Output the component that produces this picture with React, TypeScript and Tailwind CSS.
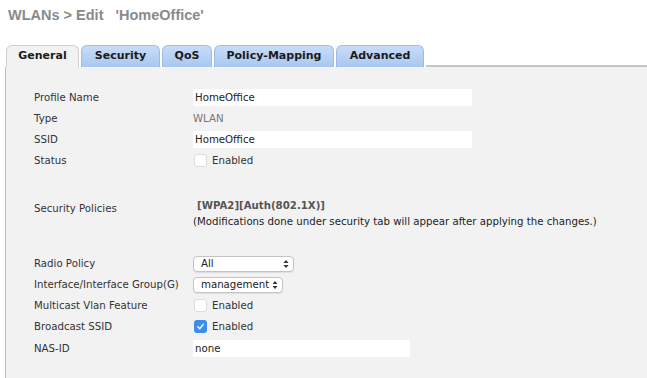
import type { ReactNode } from "react";

const tabs = ["General", "Security", "QoS", "Policy-Mapping", "Advanced"];
const tabWidths = ["w-[73px]", "w-[79px]", "w-[50px]", "w-[120px]", "w-[88px]"];

const Row = ({ label, children, h = "h-[21px]" }: { label: string; children?: ReactNode; h?: string }) => (
	<div className={`flex items-center ${h}`}>
		<div className="w-[159px] shrink-0 text-[#333]">{label}</div>
		<div className="flex items-center">{children}</div>
	</div>
);

const TextBox = ({ value, w }: { value: string; w: string }) => (
	<div className={`${w} h-[17px] bg-white flex items-center pl-[2px] text-[#222]`}>{value}</div>
);

const Check = ({ checked }: { checked?: boolean }) => (
	<div className="flex items-center">
		<div
			className={`w-[13px] h-[13px] rounded-[3px] ml-[1px] mr-[3px] flex items-center justify-center ${
				checked ? "bg-[#3b8ef0]" : "bg-white border border-[#dcdcdc]"
			}`}
		>
			{checked && (
				<svg width="9" height="9" viewBox="0 0 10 10">
					<path d="M2 5.2 L4.2 7.4 L8 2.6" stroke="white" strokeWidth="1.6" fill="none" strokeLinecap="round" />
				</svg>
			)}
		</div>
		<span className="ml-[2px] text-[#333]">Enabled</span>
	</div>
);

const Select = ({ value, w }: { value: string; w: string }) => (
	<div
		className={`${w} h-[16px] bg-white border border-[#c4c4c4] rounded-[4px] flex items-center justify-between pl-[7px] pr-[4px] text-[#222] shadow-[0_1px_1px_rgba(0,0,0,0.08)]`}
	>
		<span>{value}</span>
		<svg width="6" height="10" viewBox="0 0 6 10">
			<path d="M0.5 4 L3 1 L5.5 4 Z M0.5 6 L3 9 L5.5 6 Z" fill="#333" />
		</svg>
	</div>
);

export default function App() {
	return (
		<div className="w-[647px] h-[378px] bg-white overflow-hidden font-['DejaVu_Sans',sans-serif] text-[10.2px]">
			<div className="pl-[8px] pt-[5px] h-[45px] text-[14.5px] font-bold text-[#8a8a8a] font-['Liberation_Sans',sans-serif]">
				WLANs &gt; Edit &nbsp; 'HomeOffice'
			</div>
			<div className="flex items-end pl-[6px] h-[22px]">
				{tabs.map((t, i) => (
					<div
						key={t}
						className={`${tabWidths[i]} h-[22px] mr-[2px] rounded-t-[6px] border border-b-0 flex items-center justify-center font-bold text-[11px] text-[#1a1a1a] ${
							i === 0
								? "bg-[#f2f2f2] border-[#cfcfcf]"
								: "bg-gradient-to-b from-[#c8dcf8] to-[#a9c7f0] border-[#9fbbe3]"
						}`}
					>
						{t}
					</div>
				))}
				<div className="flex-1 border-b-2 border-[#c6c6c6] self-end" />
			</div>
			<div className="ml-[5px] h-full bg-[#f2f2f2] border-l border-[#bdbdbd] pl-[28px] pt-[20px]">
				<Row label="Profile Name">
					<TextBox value="HomeOffice" w="w-[279px]" />
				</Row>
				<Row label="Type">
					<span className="text-[#777]">WLAN</span>
				</Row>
				<Row label="SSID">
					<TextBox value="HomeOffice" w="w-[279px]" />
				</Row>
				<Row label="Status">
					<Check />
				</Row>
				<div className="h-[26px]" />
				<div className="flex">
					<div className="w-[159px] shrink-0 text-[#333] pt-[4px]">Security Policies</div>
					<div className="flex flex-col">
						<span className="font-bold text-[#555] pl-[4px] leading-[17px]">[WPA2][Auth(802.1X)]</span>
						<span className="text-[#222] leading-[16px]">
							(Modifications done under security tab will appear after applying the changes.)
						</span>
					</div>
				</div>
				<div className="h-[23px]" />
				<Row label="Radio Policy">
					<Select value="All" w="w-[101px]" />
				</Row>
				<Row label="Interface/Interface Group(G)">
					<Select value="management" w="w-[90px]" />
				</Row>
				<Row label="Multicast Vlan Feature">
					<Check />
				</Row>
				<Row label="Broadcast SSID">
					<Check checked />
				</Row>
				<Row label="NAS-ID" h="h-[23px]">
					<TextBox value="none" w="w-[217px]" />
				</Row>
			</div>
		</div>
	);
}
